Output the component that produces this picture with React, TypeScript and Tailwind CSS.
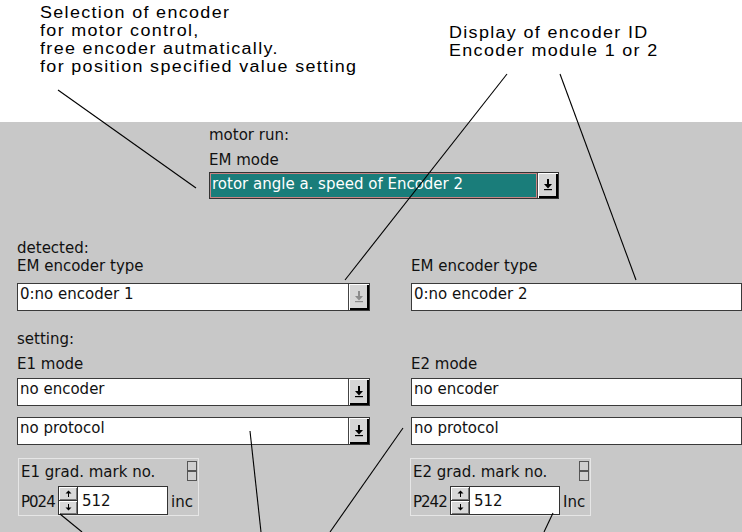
import React from 'react'

function DropArrow({ disabled = false }: { disabled?: boolean }) {
  const c = disabled ? '#8c8c8c' : '#000'
  return (
    <svg width="10" height="12" viewBox="0 0 10 12">
      <rect x="4" y="0" width="2" height="5" fill={c} />
      <path d="M1 5h8L5 9.5z" fill={c} />
      <rect x="1" y="10" width="8" height="1.2" fill={c} />
    </svg>
  )
}

function DropButton({ disabled = false }: { disabled?: boolean }) {
  return (
    <div className="flex w-[21px] shrink-0 items-center justify-center border-l border-[#444] bg-[#d6d6d6] pr-[1px] pb-[1px] shadow-[inset_1px_1px_0_#fff,inset_-2px_-2px_0_#000]">
      <DropArrow disabled={disabled} />
    </div>
  )
}

function Field({ value, button, disabled }: { value: string; button?: boolean; disabled?: boolean }) {
  return (
    <div className="flex h-[28px] border border-[#3a3a3a] bg-white">
      <div className="flex-1 overflow-hidden whitespace-nowrap pl-[2px] pt-[2px] leading-[16px]">{value}</div>
      {button && <DropButton disabled={disabled} />}
    </div>
  )
}

function StackIcon() {
  return (
    <svg width="10" height="20" viewBox="0 0 10 20">
      <rect x="0.5" y="0.5" width="9" height="9" fill="#cfcfcf" stroke="#555" />
      <rect x="0.5" y="10.5" width="9" height="9" fill="#cfcfcf" stroke="#555" />
    </svg>
  )
}

function SpinArrow({ up }: { up?: boolean }) {
  return (
    <svg width="7" height="7" viewBox="0 0 7 7">
      {up ? (
        <>
          <path d="M0.5 3.5L3.5 0.5L6.5 3.5z" fill="#000" />
          <rect x="3" y="3" width="1" height="4" fill="#000" />
        </>
      ) : (
        <>
          <rect x="3" y="0" width="1" height="4" fill="#000" />
          <path d="M0.5 3.5L3.5 6.5L6.5 3.5z" fill="#000" />
        </>
      )}
    </svg>
  )
}

function Spinner() {
  return (
    <div className="flex h-[29px] w-[20px] shrink-0 flex-col border border-[#333]">
      <div className="flex h-[14px] items-center justify-center border-b border-[#333] bg-[#d8d8d8] shadow-[inset_1px_1px_0_#fff,inset_-1px_-1px_0_#777]">
        <SpinArrow up />
      </div>
      <div className="flex flex-1 items-center justify-center bg-[#d8d8d8] shadow-[inset_1px_1px_0_#fff,inset_-1px_-1px_0_#777]">
        <SpinArrow />
      </div>
    </div>
  )
}

function GradBox({ label, param, unit, className }: { label: string; param: string; unit: string; className: string }) {
  return (
    <div className={`flex h-[58px] w-[181px] flex-col justify-between border border-[#e6e6e6] ${className}`}>
      <div className="flex items-start justify-between pl-[2px] pr-px pt-[2px]">
        <span className="mt-[3px] h-[16px] leading-[16px]">{label}</span>
        <StackIcon />
      </div>
      <div className="flex h-[29px] items-center">
        <span className="mt-[3px] w-[39px] shrink-0 pl-[2px] leading-[16px] tracking-[-1px]">{param}</span>
        <Spinner />
        <div className="h-[29px] w-[90px] shrink-0 border border-l-0 border-[#333] bg-white pl-[4px] pt-[6px] leading-[16px]">512</div>
        <span className="ml-[3px] mt-[3px] leading-[16px]">{unit}</span>
      </div>
    </div>
  )
}

export default function App() {
  return (
    <div className="relative h-[532px] w-[742px] overflow-hidden bg-white font-['DejaVu_Sans',sans-serif] text-[15px] leading-[16px] text-[#111]">
      {/* annotations */}
      <div className="flex h-[122px] font-['Liberation_Sans',Arial,sans-serif] text-[16px] leading-[18px] tracking-[1.2px] text-black">
        <div className="w-[449px] shrink-0 pl-[40px] pt-[4px]">
          <div className="origin-left scale-x-[1.12]">
            <div>Selection of encoder</div>
            <div>for motor control,</div>
            <div>free encoder autmatically.</div>
            <div>for position specified value setting</div>
          </div>
        </div>
        <div className="pt-[24px]">
          <div className="origin-left scale-x-[1.12]">
            <div>Display of encoder ID</div>
            <div>Encoder module 1 or 2</div>
          </div>
        </div>
      </div>

      {/* dialog panel */}
      <div className="flex h-[410px] flex-col bg-[#c8c8c8] pl-[17px]">
        <div className="ml-[192px] w-[350px]">
          <div className="mt-[5px] h-[16px]">motor run:</div>
          <div className="mt-[9px] h-[16px]">EM mode</div>
          <div className="mt-[4px] flex h-[27px] border border-[#333]">
            <div className="flex-1 whitespace-nowrap bg-[#1a7d7a] pl-[2px] pt-[3px] leading-[16px] text-white shadow-[inset_0_0_0_1px_#c98585]">
              rotor angle a. speed of Encoder 2
            </div>
            <DropButton />
          </div>
        </div>

        <div className="mt-[41px] h-[16px]">detected:</div>
        <div className="mt-[2px] flex h-[16px] gap-[41px]">
          <div className="w-[353px]">EM encoder type</div>
          <div className="w-[331px]">EM encoder type</div>
        </div>
        <div className="mt-[9px] flex gap-[41px]">
          <div className="w-[353px]">
            <Field value="0:no encoder 1" button disabled />
          </div>
          <div className="w-[331px]">
            <Field value="0:no encoder 2" />
          </div>
        </div>

        <div className="mt-[20px] h-[16px]">setting:</div>
        <div className="mt-[9px] flex h-[16px] gap-[41px]">
          <div className="w-[353px]">E1 mode</div>
          <div className="w-[331px]">E2 mode</div>
        </div>
        <div className="mt-[6px] flex gap-[41px]">
          <div className="w-[353px]">
            <Field value="no encoder" button />
          </div>
          <div className="w-[331px]">
            <Field value="no encoder" />
          </div>
        </div>
        <div className="mt-[11px] flex gap-[41px]">
          <div className="w-[353px]">
            <Field value="no protocol" button />
          </div>
          <div className="w-[331px]">
            <Field value="no protocol" />
          </div>
        </div>

        <div className="mt-[13px] flex gap-[41px]">
          <div className="w-[353px]">
            <GradBox label="E1 grad. mark no." param="P024" unit="inc" className="ml-px" />
          </div>
          <div className="w-[331px]">
            <GradBox label="E2 grad. mark no." param="P242" unit="Inc" className="-ml-px" />
          </div>
        </div>
      </div>

      {/* leader lines */}
      <svg className="pointer-events-none absolute inset-0" width="742" height="532" viewBox="0 0 742 532">
        <g stroke="#000" strokeWidth="1.1" fill="none">
          <line x1="58" y1="90" x2="196" y2="188" />
          <line x1="507" y1="74" x2="345" y2="280" />
          <line x1="560" y1="74" x2="636" y2="280" />
          <line x1="250" y1="431" x2="261" y2="532" />
          <line x1="403" y1="428" x2="330" y2="532" />
          <line x1="60" y1="514" x2="82" y2="532" />
          <line x1="553" y1="513" x2="544" y2="532" />
        </g>
      </svg>
    </div>
  )
}
